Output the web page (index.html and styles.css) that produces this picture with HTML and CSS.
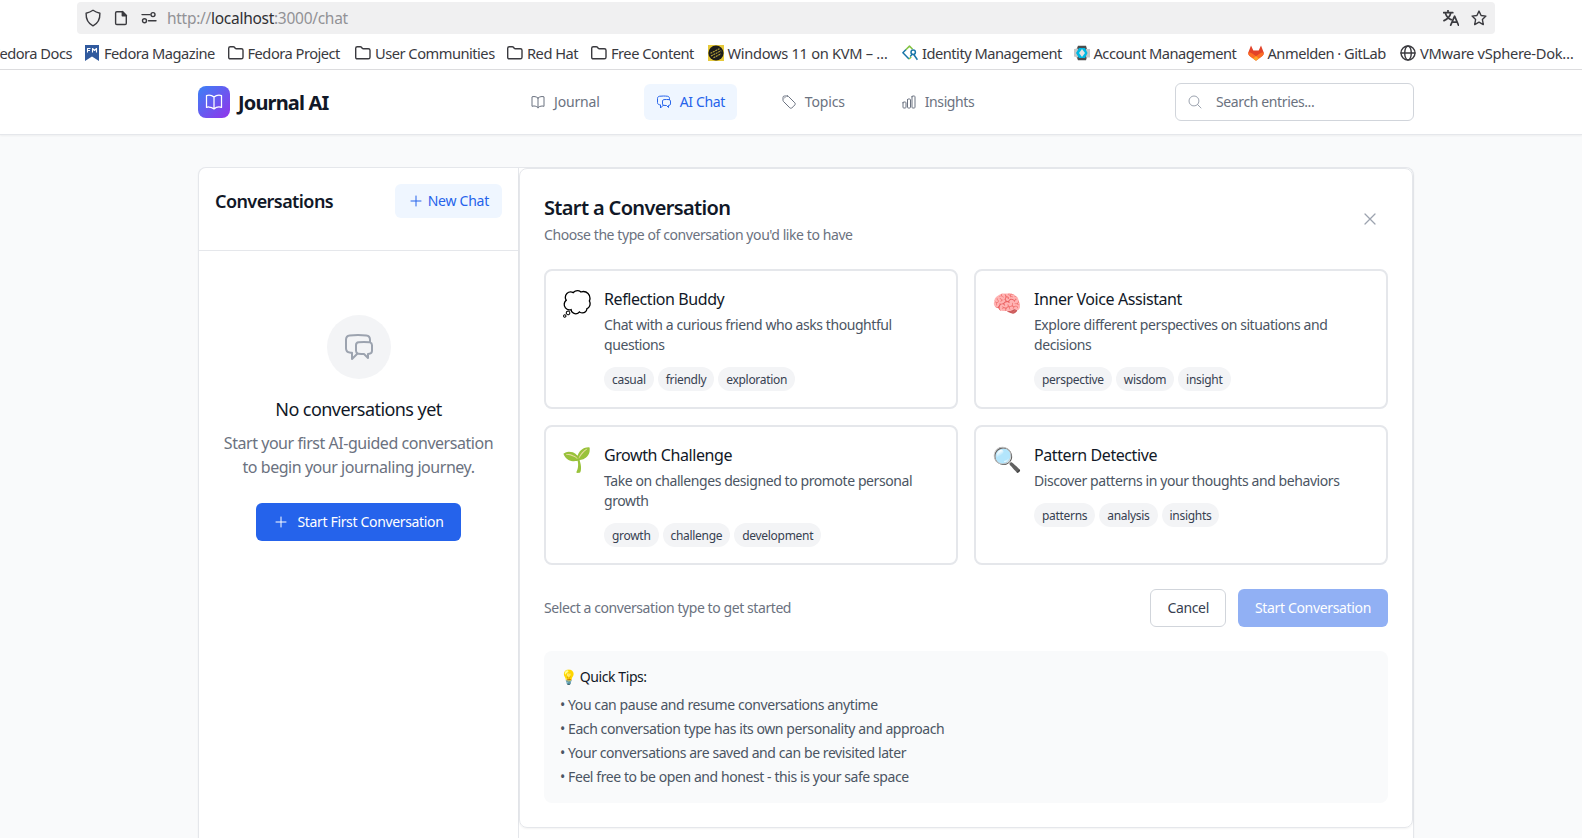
FILE: index.html
```html
<!DOCTYPE html>
<html lang="en">
<head>
<meta charset="utf-8">
<title>Journal AI</title>
<link rel="stylesheet" href="styles.css">
</head>
<body>
<svg class="defs" aria-hidden="true">
  <symbol id="book" viewBox="0 0 24 24"><path d="M12 6.042A8.967 8.967 0 0 0 6 3.75c-1.052 0-2.062.18-3 .512v14.25A8.987 8.987 0 0 1 6 18c2.305 0 4.408.867 6 2.292m0-14.25a8.966 8.966 0 0 1 6-2.292c1.052 0 2.062.18 3 .512v14.25A8.987 8.987 0 0 0 18 18a8.967 8.967 0 0 0-6 2.292m0-14.25v14.25"/></symbol>
  <symbol id="chat" viewBox="0 0 24 24"><path d="M20.25 8.511c.884.284 1.5 1.128 1.5 2.097v4.286c0 1.136-.847 2.1-1.98 2.193-.34.027-.68.052-1.02.072v3.091l-3-3c-1.354 0-2.694-.055-4.02-.163a2.115 2.115 0 0 1-.825-.242m9.345-8.334a2.126 2.126 0 0 0-.476-.095 48.64 48.64 0 0 0-8.048 0c-1.131.094-1.976 1.057-1.976 2.192v4.286c0 .837.46 1.58 1.155 1.951m9.345-8.334V6.637c0-1.621-1.152-3.026-2.76-3.235A48.455 48.455 0 0 0 11.25 3c-2.115 0-4.198.137-6.24.402-1.608.209-2.76 1.614-2.76 3.235v6.226c0 1.621 1.152 3.026 2.76 3.235.577.075 1.157.14 1.74.194V21l4.155-4.155"/></symbol>
  <symbol id="tag" viewBox="0 0 24 24"><path d="M9.568 3H5.25A2.25 2.25 0 0 0 3 5.25v4.318c0 .597.237 1.17.659 1.591l9.581 9.581c.699.699 1.78.872 2.607.33a18.095 18.095 0 0 0 5.223-5.223c.542-.827.369-1.908-.33-2.607L11.16 3.66A2.25 2.25 0 0 0 9.568 3Z"/><path d="M6 6h.008v.008H6V6Z"/></symbol>
  <symbol id="chart" viewBox="0 0 24 24"><path d="M3 13.125C3 12.504 3.504 12 4.125 12h2.25c.621 0 1.125.504 1.125 1.125v6.75C7.5 20.496 6.996 21 6.375 21h-2.25A1.125 1.125 0 0 1 3 19.875v-6.75ZM9.75 8.625c0-.621.504-1.125 1.125-1.125h2.25c.621 0 1.125.504 1.125 1.125v11.25c0 .621-.504 1.125-1.125 1.125h-2.25a1.125 1.125 0 0 1-1.125-1.125V8.625ZM16.5 4.125c0-.621.504-1.125 1.125-1.125h2.25C20.496 3 21 3.504 21 4.125v15.75c0 .621-.504 1.125-1.125 1.125h-2.25a1.125 1.125 0 0 1-1.125-1.125V4.125Z"/></symbol>
  <symbol id="search" viewBox="0 0 24 24"><path d="m21 21-5.197-5.197m0 0A7.5 7.5 0 1 0 5.196 5.196a7.5 7.5 0 0 0 10.607 10.607Z"/></symbol>
  <symbol id="plus" viewBox="0 0 24 24"><path d="M12 4.5v15m7.5-7.5h-15"/></symbol>
  <symbol id="close" viewBox="0 0 24 24"><path d="M6 18 18 6M6 6l12 12"/></symbol>
  <symbol id="folder" viewBox="0 0 16 16"><path d="M.7 12.2V3.3Q.7 1.7 2.3 1.7H5.2Q6 1.7 6.5 2.3L7.2 3.2Q7.6 3.7 8.3 3.7H13.3Q15 3.7 15 5.3V12.2Q15 13.8 13.3 13.8H2.3Q.7 13.8 .7 12.2Z"/></symbol>
</svg>

<div class="browser">
  <div class="urlbar">
    <svg class="ui shield" viewBox="0 0 16 18"><path d="M8 1.2Q11 3.3 14.9 4.2Q15.2 13.2 8 16.8Q.8 13.2 1.1 4.2Q5 3.3 8 1.2Z"/></svg>
    <svg class="ui page" viewBox="0 0 14 16"><path d="M2.8 1.7H8.6L12.3 5.4V13.3Q12.3 14.5 11.1 14.5H2.8Q1.6 14.5 1.6 13.3V2.9Q1.6 1.7 2.8 1.7Z"/><path class="solid" d="M8.3 1.5V5.7H12.5Z"/></svg>
    <svg class="ui perms" viewBox="0 0 16 16"><path d="M1 4.6H9M7.5 10.8H15"/><circle cx="12" cy="4.6" r="2"/><circle cx="3.5" cy="10.8" r="2"/></svg>
    <span class="url">http://<b>localhost</b>:3000/chat</span>
    <svg class="ui translate" viewBox="0 0 16 16"><path d="M.5 2.7H9.8M5 .5V2.5M2.3 3Q4 8.3 8.2 9.6M7.8 3Q6.5 8.3 1 10.6M7.7 15.2L11.6 6.2L15.5 15.2M9.1 12.1H14.1"/></svg>
    <svg class="ui star" viewBox="0 0 16 16"><path d="M8 1.1L10.1 5.5L14.9 6.1L11.4 9.5L12.3 14.6L8 12.2L3.7 14.6L4.6 9.5L1.1 6.1L5.9 5.5Z"/></svg>
  </div>
  <div class="bookmarks">
    <span class="bm first">Fedora Docs</span>
    <span class="bm"><svg viewBox="0 0 16 16"><path fill="#315a9e" d="M1 0H15V16L8 11.5L1 16Z"/><path fill="none" stroke="#fff" stroke-width="1.1" d="M3.5 7.5V3.5H6.5M3.5 5.5H6M8.5 7.5V3.5L10.5 5.5L12.5 3.5V7.5"/></svg>Fedora Magazine</span>
    <span class="bm"><svg class="ui"><use href="#folder"/></svg>Fedora Project</span>
    <span class="bm"><svg class="ui"><use href="#folder"/></svg>User Communities</span>
    <span class="bm"><svg class="ui"><use href="#folder"/></svg>Red Hat</span>
    <span class="bm"><svg class="ui"><use href="#folder"/></svg>Free Content</span>
    <span class="bm trimmed"><svg viewBox="0 0 16 16"><path fill="#e6c93a" d="M0 0H16V16H0Z"/><circle cx="8" cy="8" r="7.6" fill="#1d1d1b"/><path fill="none" stroke="#b9a43b" stroke-width="1.1" stroke-dasharray="2 .7" d="M2.5 8.3L11.5 3.7M3 11L13.3 5.7M5.5 12.7L13 8.8"/></svg>Windows 11 on KVM – …</span>
    <span class="bm"><svg viewBox="0 0 16 16" fill="none" stroke-width="1.5"><path stroke="#1976a8" d="M4 4.6L.9 7.8L7 14"/><path stroke="#82c341" d="M3.8 4.8L7.5 1.1L10.6 4.2M7 14L9.2 12"/><path stroke="#1976a8" d="M11.6 9.2L15.4 14.7M10.4 9L8.2 11.4"/><circle cx="11.2" cy="7.3" r="2.2" stroke="#1976a8"/></svg>Identity Management</span>
    <span class="bm"><svg viewBox="0 0 16 16"><path fill="#4d4d4d" d="M4 .8H12L14 8L12 15.2H4L1 8Z"/><path fill="#c6c6c6" d="M12 4H16V12.5H12ZM0 4L4 3.5V12.5L0 11.5Z"/><path fill="#00b8e3" d="M5 3H11L13.5 8L11 13H5L2 8Z"/><path fill="#e3e3e3" d="M8 4L11 8L8 12L5 8Z"/></svg>Account Management</span>
    <span class="bm"><svg viewBox="0 0 16 16"><path fill="#e24329" d="M3 .5L5.3 5.5H10.7L13 .5L15.6 7.2Q16.2 9.4 14.3 11L8 15.7L1.7 11Q-.2 9.4 .4 7.2Z"/><path fill="#fc6d26" d="M.4 7.2Q3 7.4 5 9L11 13.4L8 15.7L1.7 11Q-.2 9.4 .4 7.2ZM15.6 7.2Q13 7.4 11 9L5 13.4L8 15.7L14.3 11Q16.2 9.4 15.6 7.2Z"/><path fill="#fca326" d="M8 11L11.1 13.4L8 15.7L4.9 13.4Z"/></svg>Anmelden · GitLab</span>
    <span class="bm trimmed"><svg class="ui" viewBox="0 0 16 16"><circle cx="8" cy="8" r="7"/><ellipse cx="8" cy="8" rx="3.3" ry="7"/><path d="M1 8H15"/></svg>VMware vSphere-Dok…</span>
  </div>
</div>

<header class="header">
  <div class="container">
    <div class="brand"><span class="logo"><svg class="i20"><use href="#book"/></svg></span><span class="name">Journal AI</span></div>
    <nav class="nav">
      <a class="link"><svg class="i16"><use href="#book"/></svg>Journal</a>
      <a class="link active"><svg class="i16"><use href="#chat"/></svg>AI Chat</a>
      <a class="link"><svg class="i16"><use href="#tag"/></svg>Topics</a>
      <a class="link tight"><svg class="i16"><use href="#chart"/></svg>Insights</a>
    </nav>
    <div class="search"><svg class="i16"><use href="#search"/></svg>Search entries...</div>
  </div>
</header>

<main class="shell">
  <aside class="sidebar">
    <div class="side-head"><h2>Conversations</h2><button class="btn soft"><svg class="i16"><use href="#plus"/></svg>New Chat</button></div>
    <div class="empty">
      <span class="bubble"><svg class="i32"><use href="#chat"/></svg></span>
      <h3>No conversations yet</h3>
      <p>Start your first AI-guided conversation<br>to begin your journaling journey.</p>
      <button class="btn primary"><svg class="i16"><use href="#plus"/></svg>Start First Conversation</button>
    </div>
  </aside>
  <section class="panel">
    <div class="panel-head">
      <div><h1>Start a Conversation</h1><p>Choose the type of conversation you'd like to have</p></div>
      <button class="close"><svg class="i20"><use href="#close"/></svg></button>
    </div>
    <div class="cards">
      <article class="card"><span class="emoji">💭</span><div><h4>Reflection Buddy</h4><p>Chat with a curious friend who asks thoughtful<br>questions</p><div class="tags"><span>casual</span><span>friendly</span><span>exploration</span></div></div></article>
      <article class="card"><span class="emoji">🧠</span><div><h4>Inner Voice Assistant</h4><p>Explore different perspectives on situations and<br>decisions</p><div class="tags"><span>perspective</span><span>wisdom</span><span>insight</span></div></div></article>
      <article class="card"><span class="emoji">🌱</span><div><h4>Growth Challenge</h4><p>Take on challenges designed to promote personal<br>growth</p><div class="tags"><span>growth</span><span>challenge</span><span>development</span></div></div></article>
      <article class="card"><span class="emoji">🔍</span><div><h4>Pattern Detective</h4><p>Discover patterns in your thoughts and behaviors</p><div class="tags"><span>patterns</span><span>analysis</span><span>insights</span></div></div></article>
    </div>
    <div class="actions"><p>Select a conversation type to get started</p><button class="btn outline">Cancel</button><button class="btn primary disabled">Start Conversation</button></div>
    <div class="tips">
      <h5><span class="bulb">💡</span> Quick Tips:</h5>
      <ul><li>• You can pause and resume conversations anytime</li><li>• Each conversation type has its own personality and approach</li><li>• Your conversations are saved and can be revisited later</li><li>• Feel free to be open and honest - this is your safe space</li></ul>
    </div>
  </section>
</main>
</body>
</html>
```
FILE: styles.css
```css
* { box-sizing: border-box; margin: 0; padding: 0; }
html { height: 100%; overflow: hidden; }
body {
  height: 100vh;
  overflow: hidden;
  display: flex;
  flex-direction: column;
  background: #f9fafb;
  color: #111827;
  font: 14px/20px "Noto Sans", sans-serif;
  letter-spacing: -0.03em;
  white-space: nowrap;
}
svg { flex: none; fill: none; stroke: currentColor; stroke-width: 1.5; stroke-linecap: round; stroke-linejoin: round; }
button { font: inherit; letter-spacing: inherit; border: 0; background: none; color: inherit; }
ul { list-style: none; }
.defs { width: 0; height: 0; display: none; }
.i16 { width: 16px; height: 16px; }
.i20 { width: 20px; height: 20px; }
.i32 { width: 32px; height: 32px; }

/* browser chrome */
.browser { flex: none; height: 70px; padding-top: 2px; background: #fff; border-bottom: 1px solid #dcdcde; color: #3a3a3f; }
.ui { stroke: #3a3a3f; stroke-width: 1.4; }
.urlbar { width: 1418px; height: 32px; margin-left: 77px; padding: 0 8px; display: flex; align-items: center; background: #f0f0f1; border-radius: 4px; }
.shield { width: 16px; height: 18px; }
.page { width: 14px; height: 16px; margin-left: 13px; }
.page .solid { fill: #3a3a3f; }
.perms { width: 16px; height: 16px; margin-left: 13px; }
.url { margin: 0 auto 0 10px; font-size: 15.5px; letter-spacing: -0.28px; color: #929296; }
.url b { font-weight: 400; color: #2f2f33; }
.translate { width: 16px; height: 16px; margin-right: 12px; stroke-width: 1.7; }
.star { width: 16px; height: 16px; }
.bookmarks {
  height: 35px;
  padding-top: 3px;
  display: grid;
  grid-template-columns: 84px 143.5px 127.5px 152px 84px 116.5px 194.5px 171.5px 174px 152.5px 181px;
  align-items: center;
  font-size: 14.67px;
  letter-spacing: -0.5px;
}
.bm { display: flex; align-items: center; gap: 4px; }
.bm svg { width: 16px; height: 16px; }
.bm svg:not(.ui) path, .bm svg:not(.ui) circle { stroke-linecap: butt; }
.bm svg path[fill]:not([fill="none"]), .bm svg circle[fill] { stroke: none; }
.first { justify-content: flex-end; padding-right: 12px; }
.trimmed { letter-spacing: -0.3px; }

/* app header */
.header { flex: none; height: 65px; background: #fff; border-bottom: 1px solid #e5e7eb; box-shadow: 0 1px 2px rgba(0, 0, 0, .05); }
.container { width: 1216px; height: 64px; margin-left: 198px; display: flex; align-items: center; justify-content: space-between; }
.brand { width: 320px; display: flex; align-items: center; gap: 8px; font-size: 20px; font-weight: 700; letter-spacing: -0.85px; }
.name { padding-top: 2px; }
.logo { width: 32px; height: 32px; display: grid; place-items: center; border-radius: 8px; color: #fff; background: linear-gradient(135deg, #3b82f6, #9333ea); }
.nav { flex: 1; display: flex; gap: 32px; }
.link { height: 36px; padding: 0 12px; display: flex; align-items: center; gap: 8px; border-radius: 6px; color: #6b7280; letter-spacing: -0.16px; }
.active { background: #eff6ff; color: #2563eb; letter-spacing: -0.38px; }
.tight { letter-spacing: -0.42px; }
.search { width: 239px; height: 38px; padding-left: 11px; display: flex; align-items: center; gap: 13px; border: 1px solid #d1d5db; border-radius: 6px; color: #6b7280; letter-spacing: -0.38px; }
.search svg { color: #9ca3af; }

/* main frame */
.shell { flex: 1; min-height: 0; width: 1216px; margin: 32px 0 0 198px; display: flex; align-items: flex-start; background: #fff; border: 1px solid #e5e7eb; border-bottom: 0; border-radius: 8px 8px 0 0; box-shadow: 0 1px 2px rgba(0, 0, 0, .05); }
.sidebar { width: 320px; height: 100%; border-right: 1px solid #e5e7eb; }
.side-head { height: 83px; padding: 16px; display: flex; justify-content: space-between; align-items: flex-start; border-bottom: 1px solid #e5e7eb; }
.side-head h2 { font-size: 18px; line-height: 34px; font-weight: 600; letter-spacing: -0.57px; }
.btn { display: flex; align-items: center; gap: 8px; height: 38px; padding: 0 16px; border: 1px solid transparent; border-radius: 6px; letter-spacing: -0.34px; }
.soft { height: 34px; padding: 0 12px; gap: 4px; background: #eff6ff; color: #2563eb; letter-spacing: -0.25px; }
.primary { background: #2563eb; color: #fff; }
.outline { border-color: #d1d5db; color: #374151; }
.disabled { border: 0; padding: 0 17px; opacity: .5; }
.empty { padding-top: 64px; display: flex; flex-direction: column; align-items: center; text-align: center; }
.bubble { width: 64px; height: 64px; display: grid; place-items: center; border-radius: 50%; background: #f3f4f6; color: #9ca3af; }
.empty h3 { margin: 16px 0 8px; font-size: 18px; line-height: 28px; font-weight: 400; letter-spacing: -0.56px; }
.empty p { margin-bottom: 24px; font-size: 16px; line-height: 24px; color: #6b7280; letter-spacing: -0.455px; }

/* conversation picker */
.panel { flex: 1; padding: 24px; border: 1px solid #e5e7eb; border-radius: 8px; box-shadow: 0 1px 2px rgba(0, 0, 0, .05); }
.panel-head { display: flex; justify-content: space-between; align-items: center; margin-bottom: 24px; }
.panel-head h1 { padding-top: 1px; font-size: 20px; line-height: 27px; font-weight: 600; letter-spacing: -0.65px; }
.panel-head p { margin-top: 4px; color: #6b7280; }
.close { padding: 8px; display: flex; color: #9ca3af; }
.cards { display: grid; grid-template-columns: 1fr 1fr; gap: 16px; }
.card { height: 140px; padding: 16px; display: flex; gap: 12px; border: 2px solid #e5e7eb; border-radius: 8px; }
.emoji { width: 30px; font-size: 24px; line-height: 32px; letter-spacing: 0; }
.card h4 { font-size: 16px; line-height: 24px; font-weight: 400; }
.card p { margin: 4px 0 12px; color: #4b5563; }
.tags { display: flex; gap: 4px; }
.tags span { padding: 5px 8px 3px; border-radius: 12px; background: #f3f4f6; color: #374151; font-size: 12px; line-height: 16px; letter-spacing: -0.3px; }
.actions { margin-top: 24px; display: flex; align-items: center; gap: 12px; }
.actions p { margin-right: auto; color: #6b7280; }
.tips { margin-top: 24px; padding: 16px; border-radius: 8px; background: #f9fafb; }
.tips h5 { margin-bottom: 8px; font-size: 14px; font-weight: 400; }
.tips ul { display: grid; gap: 4px; color: #4b5563; }
```
